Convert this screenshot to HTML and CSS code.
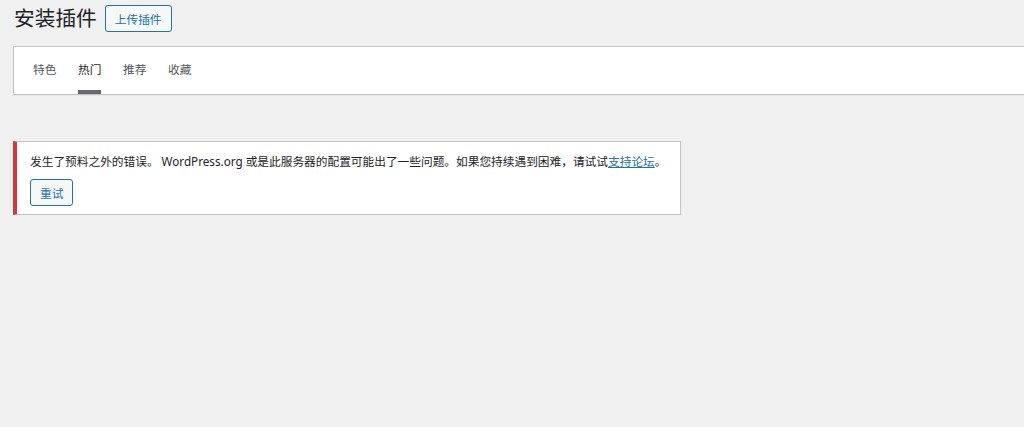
FILE: index.html
```html
<!DOCTYPE html>
<html lang="zh-CN">
<head>
    <meta charset="UTF-8" />
    <meta name="viewport" content="width=device-width, initial-scale=1.0" />
    <title>安装插件</title>
    <link rel="stylesheet" href="styles.css">
</head>
<body>
  <div class="wrap">
    <div class="page-head">
      <h1>安装插件</h1>
      <a class="button" href="#">上传插件</a>
    </div>

    <!-- 插件筛选 -->
    <div class="wp-filter">
      <ul class="filter-links">
        <li><a href="#">特色</a></li>
        <li><a href="#" class="current">热门</a></li>
        <li><a href="#">推荐</a></li>
        <li><a href="#">收藏</a></li>
      </ul>
    </div>

    <!-- 错误提示 -->
    <div class="notice notice-error">
      <p>发生了预料之外的错误。 WordPress.org 或是此服务器的配置可能出了一些问题。如果您持续遇到困难，请试试<a href="#">支持论坛</a>。</p>
      <p><button class="button">重试</button></p>
    </div>
  </div>
</body>
</html>
```

FILE: styles.css
```css
html, body {
    margin: 0;
    overflow-x: hidden;
}

body {
    background: #f0f0f1;
    color: #1d2327;
    font-family: "Noto Sans", "Noto Sans CJK SC", sans-serif;
    font-size: 11.7px;
}

.wrap {
    padding: 0 0 0 13px;
}

.page-head {
    display: flex;
    align-items: center;
    height: 37px;
}

    .page-head h1 {
        margin: 0 8px 0 1px;
        font-size: 20.7px;
        font-weight: 400;
        line-height: 1;
        color: #1d2327;
    }

.button {
    display: inline-flex;
    align-items: center;
    box-sizing: border-box;
    height: 27px;
    padding: 0 9px;
    font-family: inherit;
    font-size: 11.7px;
    color: #2271b1;
    background: #f6f7f7;
    border: 1px solid #2271b1;
    border-radius: 3px;
    text-decoration: none;
    cursor: pointer;
}

.wp-filter {
    margin: 9px -20px 0 0;
    padding: 0 0 0 19px;
    background: #fff;
    border: 1px solid #c3c4c7;
    box-shadow: 0 1px 1px rgba(0,0,0,0.04);
}

.filter-links {
    display: flex;
    gap: 21.6px;
    margin: 0;
    padding: 0;
    list-style: none;
}

    .filter-links a {
        display: block;
        padding: 14px 0 12px;
        line-height: 17px;
        color: #50575e;
        text-decoration: none;
        border-bottom: 4px solid #fff;
    }

    .filter-links a.current {
        color: #1d2327;
        border-bottom-color: #646970;
    }

.notice {
    box-sizing: border-box;
    width: 668px;
    margin-top: 46px;
    padding: 7px 12px 8px 13px;
    background: #fff;
    border: 1px solid #c3c4c7;
    border-left: 4px solid #d63638;
    box-shadow: 0 1px 1px rgba(0,0,0,0.04);
}

    .notice p {
        margin: 0;
        line-height: 25px;
    }

    .notice p + p {
        margin-top: 5px;
        line-height: 0;
    }

    .notice a {
        color: #2271b1;
    }
```
